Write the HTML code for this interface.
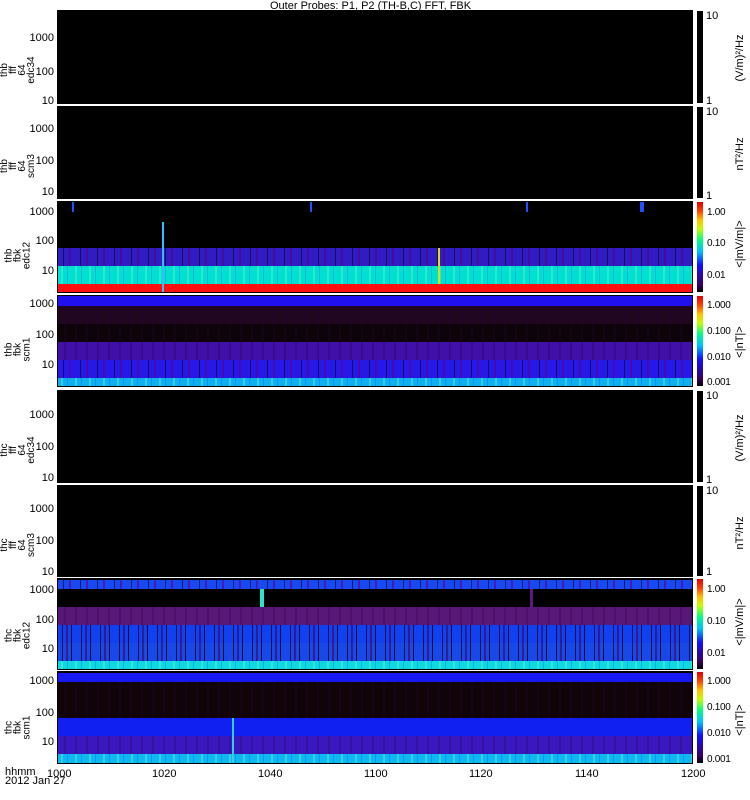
<!DOCTYPE html>
<html><head><meta charset="utf-8"><style>
body{margin:0;width:750px;height:800px;background:#fff;position:relative;overflow:hidden;font-family:"Liberation Sans",sans-serif;}
.a{position:absolute}
.p{position:absolute;left:58px;width:634px;background:#000;overflow:hidden;outline:1px solid #000}
.b{position:absolute;left:0;width:100%}
.cb{position:absolute;left:697px;width:6px;background:#000}
.rb{background:linear-gradient(to top,#000 0%,#3a0060 8%,#1010ff 30%,#00c0ff 45%,#00ff80 58%,#c0ff00 70%,#ffc000 80%,#ff4000 90%,#e00000 100%)}
.t{position:absolute;font-size:11px;line-height:11px;color:#000;white-space:nowrap}
.c{font-size:10px;letter-spacing:-0.3px}
.yl{position:absolute;font-size:11px;line-height:11px;text-align:right;width:40px;left:14px}
.sl{position:absolute;font-size:10px;line-height:8px;text-align:center;transform:rotate(-90deg);transform-origin:center;width:60px;left:-12px}
.rl{position:absolute;font-size:11px;transform:rotate(-90deg);transform-origin:center;white-space:nowrap;width:80px;text-align:center;left:700px!important}
.s1{background-image:repeating-linear-gradient(90deg,transparent 0 5px,rgba(0,0,0,.55) 5px 6px,transparent 6px 11px,rgba(90,0,140,.6) 11px 13px,transparent 13px 17px)}
.s2{background-image:repeating-linear-gradient(90deg,transparent 0 3px,rgba(120,255,200,.35) 3px 5px,transparent 5px 9px,rgba(0,80,255,.3) 9px 10px,transparent 10px 14px)}
.s3{background-image:repeating-linear-gradient(90deg,transparent 0 4px,rgba(0,0,0,.7) 4px 5px,transparent 5px 8px,rgba(60,0,90,.6) 8px 10px,transparent 10px 13px,rgba(0,0,0,.8) 13px 14px,transparent 14px 19px)}
.s4{background-image:repeating-linear-gradient(90deg,transparent 0 6px,rgba(40,0,60,.25) 6px 8px,transparent 8px 11px)}
</style></head><body>
<div class="t" style="left:270px;top:1px;font-size:11px">Outer Probes: P1, P2 (TH-B,C) FFT, FBK</div>

<div class="p" style="top:11px;height:92px"></div>
<div class="cb" style="top:11px;height:92px"></div>
<div class="yl" style="top:33px">1000</div><div class="yl" style="top:67px">100</div><div class="yl" style="top:96px">10</div>
<div class="sl" style="top:52px;line-height:9px">thb<br>fff<br>64<br>edc34</div>
<div class="t" style="left:706px;top:11px">10</div><div class="t" style="left:706px;top:96px">1</div>
<div class="rl" style="top:52px">(V/m)²/Hz</div>

<div class="p" style="top:107px;height:91px"></div>
<div class="cb" style="top:107px;height:91px"></div>
<div class="yl" style="top:124px">1000</div><div class="yl" style="top:156px">100</div><div class="yl" style="top:187px">10</div>
<div class="sl" style="top:148px;line-height:9px">thb<br>fff<br>64<br>scm3</div>
<div class="t" style="left:706px;top:107px">10</div><div class="t" style="left:706px;top:191px">1</div>
<div class="rl" style="top:148px">nT²/Hz</div>

<div class="p" style="top:202px;height:90px">
 <div class="b" style="top:46px;height:18px;background:#2a0a55"></div>
 <div class="b s1" style="top:46px;height:18px;background-color:#3020d0;opacity:.9"></div>
 <div class="b" style="top:64px;height:18px;background:#00e0d0"></div>
 <div class="b s2" style="top:64px;height:18px"></div>
 <div class="b" style="top:82px;height:8px;background:#ff1010"></div>
 <div class="a" style="left:104px;top:20px;width:2px;height:70px;background:#30c0ff"></div>
 <div class="a" style="left:380px;top:46px;width:2px;height:36px;background:#e0e000"></div>
 <div class="a" style="left:582px;top:0;width:4px;height:10px;background:#2050ff"></div>
 <div class="a" style="left:14px;top:0;width:2px;height:10px;background:#2050ff"></div>
 <div class="a" style="left:252px;top:0;width:2px;height:10px;background:#2050ff"></div>
 <div class="a" style="left:468px;top:0;width:2px;height:10px;background:#2050ff"></div>
</div>
<div class="cb rb" style="top:202px;height:90px"></div>
<div class="yl" style="top:207px">1000</div><div class="yl" style="top:236px">100</div><div class="yl" style="top:266px">10</div>
<div class="sl" style="top:242px;line-height:9px">thb<br>fbk<br>edc12</div>
<div class="t c" style="left:707px;top:207px">1.00</div><div class="t c" style="left:707px;top:238px">0.10</div><div class="t c" style="left:707px;top:270px">0.01</div>
<div class="rl" style="top:238px">&lt;|mV/m|&gt;</div>

<div class="p" style="top:296px;height:90px">
 <div class="b" style="top:0;height:10px;background:#2010f0"></div>
 <div class="b s4" style="top:10px;height:18px;background-color:#20061f"></div>
 <div class="b s4" style="top:28px;height:18px;background-color:#0c0408"></div>
 <div class="b s4" style="top:46px;height:18px;background-color:#4010a8"></div>
 <div class="b s1" style="top:64px;height:18px;background-color:#2818e8"></div>
 <div class="b s2" style="top:82px;height:8px;background-color:#10b0f0"></div>
</div>
<div class="cb rb" style="top:296px;height:90px"></div>
<div class="yl" style="top:299px">1000</div><div class="yl" style="top:330px">100</div><div class="yl" style="top:360px">10</div>
<div class="sl" style="top:336px;line-height:9px">thb<br>fbk<br>scm1</div>
<div class="t c" style="left:707px;top:300px">1.000</div><div class="t c" style="left:707px;top:326px">0.100</div><div class="t c" style="left:707px;top:352px">0.010</div><div class="t c" style="left:707px;top:377px">0.001</div>
<div class="rl" style="top:336px">&lt;|nT|&gt;</div>

<div class="p" style="top:391px;height:91px"></div>
<div class="cb" style="top:391px;height:91px"></div>
<div class="yl" style="top:410px">1000</div><div class="yl" style="top:442px">100</div><div class="yl" style="top:473px">10</div>
<div class="sl" style="top:432px;line-height:9px">thc<br>fff<br>64<br>edc34</div>
<div class="t" style="left:706px;top:391px">10</div><div class="t" style="left:706px;top:475px">1</div>
<div class="rl" style="top:432px">(V/m)²/Hz</div>

<div class="p" style="top:486px;height:90px"></div>
<div class="cb" style="top:486px;height:90px"></div>
<div class="yl" style="top:504px">1000</div><div class="yl" style="top:536px">100</div><div class="yl" style="top:567px">10</div>
<div class="sl" style="top:527px;line-height:9px">thc<br>fff<br>64<br>scm3</div>
<div class="t" style="left:706px;top:486px">10</div><div class="t" style="left:706px;top:567px">1</div>
<div class="rl" style="top:527px">nT²/Hz</div>

<div class="p" style="top:579px;height:90px">
 <div class="b s1" style="top:1px;height:9px;background-color:#1848f0"></div>
 <div class="b" style="top:10px;height:18px;background:#000"></div>
 <div class="b s4" style="top:28px;height:18px;background-color:#581878"></div>
 <div class="b s3" style="top:46px;height:18px;background-color:#1040f0"></div>
 <div class="b s3" style="top:64px;height:18px;background-color:#1848e8"></div>
 <div class="b s2" style="top:82px;height:9px;background-color:#10d8e0"></div>
 <div class="a" style="left:202px;top:10px;width:4px;height:18px;background:#30e0d0"></div>
 <div class="a" style="left:472px;top:10px;width:3px;height:18px;background:#5a1880"></div>
</div>
<div class="cb rb" style="top:579px;height:90px"></div>
<div class="yl" style="top:585px">1000</div><div class="yl" style="top:615px">100</div><div class="yl" style="top:644px">10</div>
<div class="sl" style="top:622px;line-height:9px">thc<br>fbk<br>edc12</div>
<div class="t c" style="left:707px;top:584px">1.00</div><div class="t c" style="left:707px;top:616px">0.10</div><div class="t c" style="left:707px;top:648px">0.01</div>
<div class="rl" style="top:616px">&lt;|mV/m|&gt;</div>

<div class="p" style="top:672px;height:91px">
 <div class="b" style="top:1px;height:9px;background:#1818f0"></div>
 <div class="b s4" style="top:10px;height:36px;background-color:#100408"></div>
 <div class="b" style="top:46px;height:18px;background:#1020f0"></div>
 <div class="b s4" style="top:64px;height:18px;background-color:#3a18c0"></div>
 <div class="b s2" style="top:82px;height:9px;background-color:#10b8f0"></div>
 <div class="a" style="left:174px;top:46px;width:2px;height:45px;background:#30d0e0"></div>
</div>
<div class="cb rb" style="top:672px;height:91px"></div>
<div class="yl" style="top:676px">1000</div><div class="yl" style="top:708px">100</div><div class="yl" style="top:737px">10</div>
<div class="sl" style="top:714px;line-height:9px">thc<br>fbk<br>scm1</div>
<div class="t c" style="left:707px;top:676px">1.000</div><div class="t c" style="left:707px;top:702px">0.100</div><div class="t c" style="left:707px;top:728px">0.010</div><div class="t c" style="left:707px;top:754px">0.001</div>
<div class="rl" style="top:714px">&lt;|nT|&gt;</div>

<div class="t" style="left:5px;top:768px;line-height:9px">hhmm<br>2012 Jan 27</div>
<div class="t" style="left:47px;top:769px">1000</div>
<div class="t" style="left:152px;top:769px">1020</div>
<div class="t" style="left:258px;top:769px">1040</div>
<div class="t" style="left:364px;top:769px">1100</div>
<div class="t" style="left:469px;top:769px">1120</div>
<div class="t" style="left:575px;top:769px">1140</div>
<div class="t" style="left:681px;top:769px">1200</div>
</body></html>
